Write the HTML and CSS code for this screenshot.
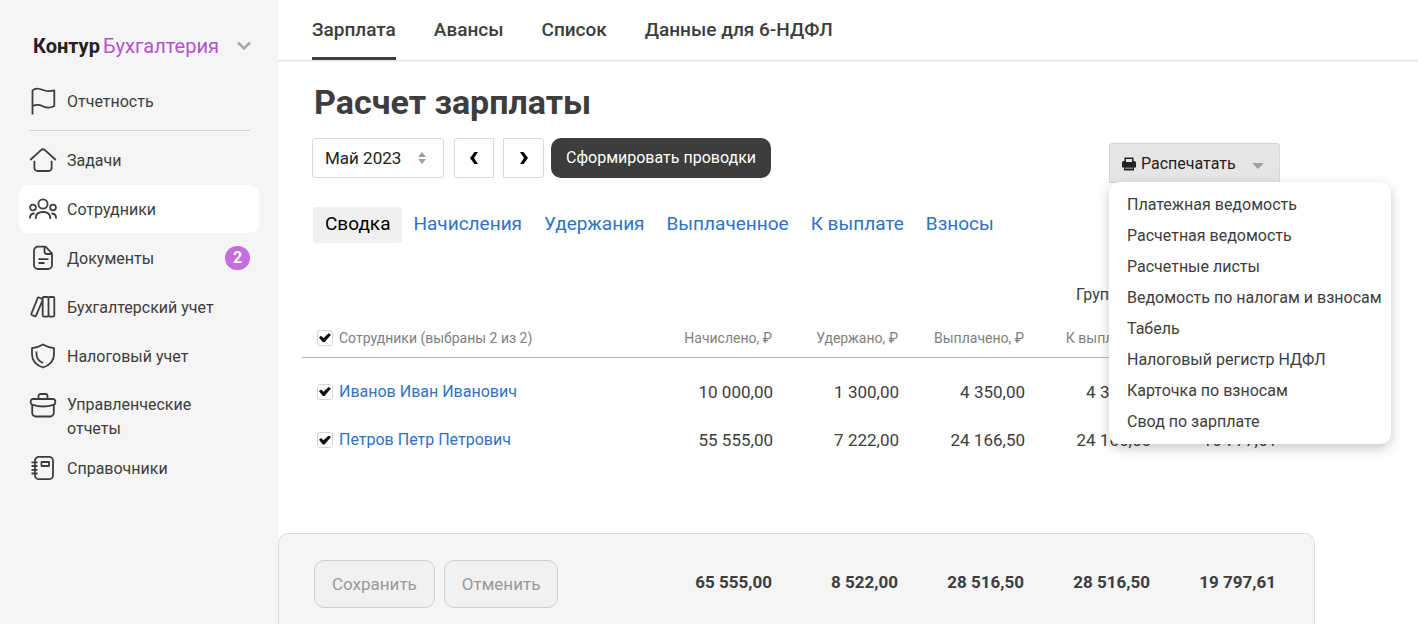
FILE: index.html
```html
<!DOCTYPE html>
<html lang="ru">
<head>
<meta charset="utf-8">
<title>Расчет зарплаты</title>
<link rel="stylesheet" href="styles.css">
</head>
<body>
<div class="app">
  <aside class="sidebar">
    <button class="brand" type="button">
      <span class="brand-name">Контур</span><span class="brand-product">Бухгалтерия</span>
      <svg class="brand-arrow" width="16" height="12" viewBox="0 0 16 12"><path d="M2 2.500l6 6 6-6" fill="none" stroke="#a8a8a8" stroke-width="2.500"/></svg>
    </button>
    <nav class="menu">
      <a class="item" href="#"><svg class="icon" viewBox="0 0 28 28"><path d="M3.500 27.500V3.500C6 .8 10.500 1.500 14 3c3.500 1.500 7 1.300 11.300.3V19c-4 2.200-8 2-11.500.2-3.500-1.700-7-1.700-10.300 0"/></svg><span class="item-label">Отчетность</span></a>
      <hr class="divider">
      <a class="item" href="#"><svg class="icon" viewBox="0 0 28 28"><path d="M1.200 14 12 4.200a3 3 0 0 1 4 0L26.800 14M5.400 14.800V22a3 3 0 0 0 3 3h11.200a3 3 0 0 0 3-3v-7.200"/></svg><span class="item-label">Задачи</span></a>
      <a class="item item-active" href="#"><svg class="icon" viewBox="0 0 28 28"><circle cx="14" cy="9" r="4.600"/><circle cx="4" cy="12.500" r="2.900"/><circle cx="24" cy="12.500" r="2.900"/><path d="M6.800 24v-1c0-4 3-6 7.200-6s7.200 2 7.200 6v1M.9 23.500c0-3 1.500-5 4.600-5M27.100 23.500c0-3-1.500-5-4.600-5"/></svg><span class="item-label">Сотрудники</span></a>
      <a class="item" href="#"><svg class="icon" viewBox="0 0 28 28"><path d="M16.500 2.700H9a4 4 0 0 0-4 4V21a4 4 0 0 0 4 4h10a4 4 0 0 0 4-4V9.500zM15.500 3v4.500a2.500 2.500 0 0 0 2.500 2.500h5M9.500 15.200h10M9.500 19h6"/></svg><span class="item-label">Документы</span><span class="badge">2</span></a>
      <a class="item" href="#"><svg class="icon" viewBox="0 0 28 28"><path d="M10 4.500 13.200 5.800a1 1 0 0 1 .5 1.300L7 22.700a1 1 0 0 1-1.300.5l-2.800-1.200a1 1 0 0 1-.5-1.300L8.700 5a1 1 0 0 1 1.300-.5zM15 4h3.200a1.300 1.300 0 0 1 1.300 1.300v17a1.300 1.300 0 0 1-1.300 1.300H15a1.300 1.300 0 0 1-1.300-1.300v-17A1.300 1.300 0 0 1 15 4zM20.800 4H24a1.300 1.300 0 0 1 1.300 1.300v17a1.300 1.300 0 0 1-1.300 1.300h-3.200a1.300 1.300 0 0 1-1.300-1.300v-17A1.300 1.300 0 0 1 20.800 4z"/></svg><span class="item-label">Бухгалтерский учет</span></a>
      <a class="item" href="#"><svg class="icon" viewBox="0 0 28 28"><path d="M14 2.500c3.300 2 6.900 3.300 11 3.700v6c0 6-4 10.800-11 13.300C7 23 3 18.200 3 12.200v-6c4.100-.4 7.700-1.700 11-3.700zM7.500 9.500v3c0 3.800 2.500 6.600 6.500 8.500"/></svg><span class="item-label">Налоговый учет</span></a>
      <a class="item item-tall" href="#"><svg class="icon" viewBox="0 0 28 28"><path d="M9.500 8V5a2 2 0 0 1 2-2h5a2 2 0 0 1 2 2v3M4 8h20a2.300 2.300 0 0 1 2.300 2.300v1.200c0 1.200-.8 2-2 2.300-7 2.300-13.600 2.300-20.600 0-1.200-.3-2-1.100-2-2.300v-1.200A2.300 2.300 0 0 1 4 8zM3.200 14v8a3.500 3.500 0 0 0 3.500 3.500h14.600a3.500 3.500 0 0 0 3.500-3.500v-8"/></svg><span class="item-label">Управленческие отчеты</span></a>
      <a class="item" href="#"><svg class="icon" viewBox="0 0 28 28"><path d="M10 2.800h10a4 4 0 0 1 4 4v14.400a4 4 0 0 1-4 4H10a4 4 0 0 1-4-4V6.800a4 4 0 0 1 4-4zM2.500 8.300h6M2.500 12h6M2.500 15.800h6M2.500 19.500h6M12.500 8h7.500v4h-7.500z"/></svg><span class="item-label">Справочники</span></a>
    </nav>
  </aside>

  <main class="main">
    <nav class="tabs">
      <a class="tab tab-active" href="#">Зарплата</a>
      <a class="tab" href="#">Авансы</a>
      <a class="tab" href="#">Список</a>
      <a class="tab" href="#">Данные для 6-НДФЛ</a>
    </nav>

    <div class="content">
      <h1 class="title">Расчет зарплаты</h1>

      <div class="toolbar">
        <div class="period">
          <select class="period-select" aria-label="Период"><option>Май 2023</option></select>
          <svg class="period-arrows" width="8" height="12" viewBox="0 0 8 12"><path d="M0 5l4-5 4 5zM0 7l4 5 4-5z" fill="#a0a0a0"/></svg>
        </div>
        <button class="step step-prev" type="button" aria-label="Предыдущий месяц"><svg width="10" height="14" viewBox="0 0 10 14"><path d="M5.500 1H9L5 7l4 6H5.500L1 7z"/></svg></button>
        <button class="step step-next" type="button" aria-label="Следующий месяц"><svg width="10" height="14" viewBox="0 0 10 14"><path d="M4.500 1H1l4 6-4 6h3.500L9 7z"/></svg></button>
        <button class="primary" type="button">Сформировать проводки</button>

        <div class="print">
          <button class="print-button" type="button" aria-expanded="true">
            <svg width="14" height="14" viewBox="0 0 14 14"><path fill-rule="evenodd" d="M2.500.5h9V4h.8A1.700 1.700 0 0 1 14 5.700V10.500h-2v3H2v-3H0V5.700A1.700 1.700 0 0 1 1.700 4h.8zM4 2v3h6V2zM3 10.800v.7h8v-.7z" fill="#222"/></svg>
            <span>Распечатать</span>
            <svg class="print-arrow" width="12" height="6" viewBox="0 0 12 6"><path d="M0 0h12L6 6z" fill="#a0a0a0"/></svg>
          </button>
          <div class="dropdown">
            <a href="#">Платежная ведомость</a>
            <a href="#">Расчетная ведомость</a>
            <a href="#">Расчетные листы</a>
            <a href="#">Ведомость по налогам и взносам</a>
            <a href="#">Табель</a>
            <a href="#">Налоговый регистр НДФЛ</a>
            <a href="#">Карточка по взносам</a>
            <a href="#">Свод по зарплате</a>
          </div>
        </div>
      </div>

      <nav class="views">
        <a class="view view-active" href="#">Сводка</a>
        <a class="view" href="#">Начисления</a>
        <a class="view" href="#">Удержания</a>
        <a class="view" href="#">Выплаченное</a>
        <a class="view" href="#">К выплате</a>
        <a class="view" href="#">Взносы</a>
      </nav>

      <div class="grouping"><span>Группировать</span></div>

      <table class="grid">
        <thead>
          <tr>
            <th class="name"><label class="pick"><input class="check" type="checkbox" checked><span>Сотрудники (выбраны 2 из 2)</span></label></th>
            <th class="num">Начислено, ₽</th><th class="num">Удержано, ₽</th><th class="num">Выплачено, ₽</th><th class="num">К выплате, ₽</th><th class="num">Взносы, ₽</th>
          </tr>
        </thead>
        <tbody>
          <tr>
            <td class="name"><div class="pick"><input class="check" type="checkbox" checked aria-label="Иванов Иван Иванович"><a href="#">Иванов Иван Иванович</a></div></td>
            <td class="num">10 000,00</td><td class="num">1 300,00</td><td class="num">4 350,00</td><td class="num">4 350,00</td><td class="num">3 020,00</td>
          </tr>
          <tr>
            <td class="name"><div class="pick"><input class="check" type="checkbox" checked aria-label="Петров Петр Петрович"><a href="#">Петров Петр Петрович</a></div></td>
            <td class="num">55 555,00</td><td class="num">7 222,00</td><td class="num">24 166,50</td><td class="num">24 166,50</td><td class="num">16 777,61</td>
          </tr>
        </tbody>
      </table>
    </div>

    <footer class="footer">
      <div class="actions">
        <button class="action" type="button" disabled>Сохранить</button>
        <button class="action" type="button" disabled>Отменить</button>
      </div>
      <div class="totals">
        <span>65 555,00</span><span>8 522,00</span><span>28 516,50</span><span>28 516,50</span><span>19 797,61</span>
      </div>
    </footer>
  </main>
</div>
</body>
</html>
```
FILE: styles.css
```css
* { box-sizing: border-box; }
body {
  margin: 0;
  font: 16px/24px Roboto, "Liberation Sans", sans-serif;
  color: #3d3d3d;
  background: #fff;
}
a { text-decoration: none; color: inherit; }
button, select { font: inherit; color: inherit; }

.app { display: flex; min-height: 100vh; }

/* Sidebar */
.sidebar { flex: 0 0 278px; padding: 34px 19px 0; background: #f5f5f5; }
.brand {
  display: flex;
  align-items: center;
  width: 100%;
  margin-bottom: 19px;
  padding: 0 7px 0 14px;
  border: 0;
  background: none;
  font-size: 20px;
}
.brand-name { margin-right: 3px; font-weight: 700; color: #222; }
.brand-product { color: #b750d1; }
.brand-arrow { margin-left: auto; }
.menu { display: flex; flex-direction: column; gap: 1px; }
.item {
  display: flex;
  align-items: center;
  gap: 10px;
  min-height: 48px;
  padding: 0 9px 0 10px;
  border-radius: 10px;
}
.item-label { padding-top: 2px; }
.item-active { background: #fff; }
.item-tall { align-items: flex-start; padding: 10px 50px 2px 10px; }
.icon {
  flex: none;
  width: 28px;
  height: 28px;
  fill: none;
  stroke: #3d3d3d;
  stroke-width: 1.800;
  stroke-linejoin: round;
}
.divider { width: auto; margin: 4px 9px 4px 10px; border: 0; border-top: 1px solid #d2d2d2; }
.badge {
  width: 25px;
  height: 24px;
  margin-left: auto;
  border-radius: 12px;
  background: #c56ddd;
  color: #fff;
  font-weight: 700;
  text-align: center;
}

/* Main column */
.main { flex: 1; min-width: 0; display: flex; flex-direction: column; }
.tabs {
  display: flex;
  gap: 38px;
  height: 61px;
  padding: 0 34px;
  border-bottom: 1px solid #e4e4e4;
  box-shadow: 0 1px 1px #f2f2f2;
  font-size: 19px;
  font-weight: 500;
}
.tab { padding-top: 18px; }
.tab-active { border-bottom: 3px solid #3d3d3d; }
.content { padding: 21px 138px 24px 34px; }
.title { margin: 0 2px 16px; font-size: 34px; line-height: 40px; font-weight: 700; }

.toolbar { display: flex; align-items: flex-start; }
.period { position: relative; width: 132px; margin-right: 10px; }
.period-select {
  width: 100%;
  height: 40px;
  padding: 0 12px;
  border: 1px solid #d9d9d9;
  border-radius: 3px;
  background: #fff;
  color: #222;
  font-size: 17px;
  appearance: none;
}
.period-arrows { position: absolute; right: 18px; top: 14px; pointer-events: none; }
.step {
  display: grid;
  place-items: center;
  width: 40px;
  height: 40px;
  padding: 0;
  border: 1px solid #d9d9d9;
  background: #fff;
}
.step-prev { margin-right: 9px; border-radius: 3px 0 0 3px; }
.step-next { width: 41px; margin-right: 7px; border-radius: 0 3px 3px 0; }
.primary {
  height: 40px;
  padding: 0 15px;
  border: 0;
  border-radius: 10px;
  background: #3d3d3d;
  color: #fff;
}
.print { position: relative; margin: 5px 0 0 auto; }
.print-button {
  display: flex;
  align-items: center;
  gap: 5px;
  width: 171px;
  height: 40px;
  padding: 2px 15px 0 12px;
  border: 1px solid #d5d5d5;
  border-radius: 3px 3px 0 0;
  background: #e5e5e5;
  color: #222;
}
.print-arrow { margin: 4px 0 0 auto; }
.dropdown {
  position: absolute;
  z-index: 1;
  top: 39px;
  left: 0;
  display: grid;
  width: 282px;
  padding: 7px 0 7px 18px;
  border-radius: 10px;
  background: #fff;
  box-shadow: 0 4px 12px rgba(0, 0, 0, .22);
  line-height: 31px;
  white-space: nowrap;
}

.views { display: flex; margin: 24px 1px 0; font-size: 19px; line-height: 34px; white-space: nowrap; }
.view { height: 36px; padding: 0 11px; color: #3072c4; }
.view-active { padding: 0 12px; border-radius: 4px; background: #f0f0f0; color: #000; }

.grouping { display: flex; justify-content: flex-end; margin-top: 40px; }
.grouping span { width: 204px; }

.grid {
  width: calc(100% + 10px);
  margin: 12px 0 0 -10px;
  border-collapse: collapse;
  table-layout: fixed;
}
.grid th, .grid td { padding: 0; }
.grid th {
  height: 38px;
  border-bottom: 1px solid #b8b8b8;
  color: #808080;
  font-size: 14px;
  font-weight: 400;
}
.grid td { height: 49px; padding-top: 18px; vertical-align: top; font-size: 17px; }
.grid tbody tr:first-child td { height: 53px; padding-top: 22px; }
.grid .num { width: 126px; padding-right: 3px; text-align: right; }
.grid th.num { padding-right: 4px; }
.grid .name { text-align: left; }
.grid a { color: #3072c4; font-size: 16px; }
.pick { display: flex; align-items: center; gap: 6px; padding-left: 15px; }
.check {
  display: grid;
  place-items: center;
  width: 16px;
  height: 16px;
  margin: 0;
  border: 1px solid #d5d5d5;
  border-radius: 3px;
  background: #fff;
  appearance: none;
}
.check:checked::before {
  content: "";
  width: 12px;
  height: 9px;
  background: #111;
  clip-path: polygon(0 47%, 16% 28%, 38% 52%, 80% 0, 100% 18%, 46% 100%, 32% 100%);
}

/* Totals bar */
.footer {
  display: flex;
  justify-content: space-between;
  align-items: flex-start;
  margin: auto 103px 0 0;
  padding: 26px 38px 16px 35px;
  border: 1px solid #dcdcdc;
  border-bottom: 0;
  border-radius: 10px 10px 0 0;
  background: #f5f5f5;
}
.actions { display: flex; gap: 9px; }
.action {
  height: 48px;
  padding: 0 17px;
  border: 1px solid #d0d0d0;
  border-radius: 10px;
  background: #f1f1f1;
  color: #999;
  font-size: 17px;
}
.totals { display: flex; padding-top: 10px; font-size: 17px; font-weight: 700; }
.totals span { width: 126px; text-align: right; }
```
